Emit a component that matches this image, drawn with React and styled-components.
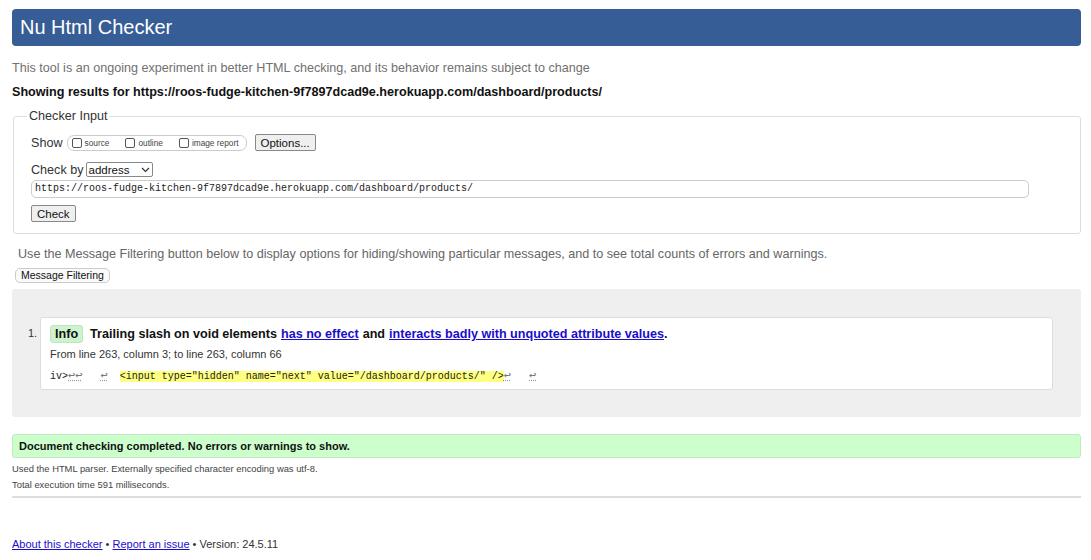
import React from "react";
import styled, { createGlobalStyle } from "styled-components";

const Global = createGlobalStyle`
  html, body { margin: 0; padding: 0; background: #fff; }
  body { font-family: "Liberation Sans", Arial, sans-serif; color: #222; }
`;

const Page = styled.div`
  padding: 9px 10px 0 12px;
  display: flex;
  flex-direction: column;
`;

const Header = styled.h1`
  margin: 0;
  height: 37px;
  background: #365d95;
  border-radius: 4px;
  color: #fff;
  font-weight: normal;
  font-size: 20px;
  line-height: 37px;
  padding-left: 8px;
`;

const Intro = styled.p`
  margin: 14px 0 0 0;
  font-size: 12.6px;
  color: #707070;
  line-height: 16px;
`;

const Results = styled.p`
  margin: 8px 0 0 0;
  font-size: 12.6px;
  font-weight: bold;
  color: #111;
  line-height: 16px;
`;

const Fieldset = styled.fieldset`
  margin: 9px 0 0 1px;
  border: 1px solid #ddd;
  border-radius: 3px;
  padding: 0 51px 11px 17px;
  display: flex;
  flex-direction: column;
`;

const Legend = styled.legend`
  font-size: 12.6px;
  color: #333;
  padding: 0 2px;
  margin-left: -4px;
`;

const Row = styled.div`
  display: flex;
  align-items: center;
  gap: ${(p) => p.$gap || 3}px;
  margin-top: ${(p) => p.$mt || 0}px;
  font-size: 12.6px;
  color: #333;
`;

const Group = styled.span`
  display: inline-flex;
  align-items: center;
  gap: 16px;
  border: 1px solid #ccc;
  border-radius: 7px;
  height: 14px;
  width: 170px;
  padding: 0 4px 0 4px;
  margin-left: 1px;
`;

const Check = styled.label`
  display: inline-flex;
  align-items: center;
  gap: 2px;
  font-size: 8.3px;
  color: #444;
`;

const Box = styled.span`
  width: 8px;
  height: 8px;
  border: 1px solid #555;
  border-radius: 2px;
  display: inline-block;
  margin-right: 1px;
`;

const Button = styled.button`
  font-family: "Liberation Sans", Arial, sans-serif;
  font-size: ${(p) => p.$fs || 12}px;
  color: #111;
  background: ${(p) => (p.$light ? "#fafafa" : "#efefef")};
  border: 1px solid ${(p) => (p.$light ? "#ccc" : "#888")};
  border-radius: ${(p) => (p.$light ? 5 : 2)}px;
  height: ${(p) => p.$h || 17}px;
  padding: 0 ${(p) => p.$px || 5}px;
  margin-left: ${(p) => p.$ml || 0}px;
  cursor: pointer;
`;

const Select = styled.span`
  display: inline-flex;
  align-items: center;
  justify-content: space-between;
  width: 61px;
  height: 13px;
  border: 1px solid #888;
  border-radius: 2px;
  padding: 0 2px;
  font-size: 11.5px;
  color: #111;
`;

const UrlInput = styled.div`
  margin-top: 3px;
  height: 16px;
  border: 1px solid #ccc;
  border-radius: 5px;
  font-family: "Liberation Mono", "Courier New", monospace;
  font-size: 10px;
  line-height: 16px;
  padding-left: 3px;
  color: #222;
`;

const Help = styled.p`
  margin: 12px 0 0 6px;
  font-size: 12.6px;
  color: #666;
  line-height: 16px;
`;

const FilterWrap = styled.div`
  margin: 3px 0 0 3px;
`;

const Panel = styled.div`
  margin-top: 6px;
  background: #efefef;
  border-radius: 3px;
  padding: 28px 28px 27px 16px;
`;

const List = styled.ol`
  margin: 0;
  padding: 0;
  list-style: none;
`;

const Item = styled.li`
  display: flex;
  align-items: flex-start;
  gap: 3px;
`;

const Num = styled.span`
  font-size: 11px;
  color: #333;
  width: 9px;
  padding-top: 10px;
`;

const Card = styled.div`
  flex: 1;
  background: #fff;
  border: 1px solid #ddd;
  border-radius: 3px;
  padding: 7px 9px 5px 9px;
`;

const Title = styled.p`
  margin: 0;
  font-size: 12.6px;
  font-weight: bold;
  color: #111;
  display: flex;
  align-items: center;
  line-height: 18px;
`;

const Badge = styled.span`
  background: #ccf3cc;
  border: 1px solid #bde6bd;
  border-radius: 3px;
  padding: 0 4px;
  margin-right: 7px;
  height: 16px;
  line-height: 16px;
`;

const Link = styled.a`
  color: #1a0dcc;
  text-decoration: underline;
  margin: 0 ${(p) => (p.$tight ? 0 : 4)}px 0 4px;
`;

const Loc = styled.p`
  margin: 4px 0 0 0;
  font-size: 11px;
  color: #333;
  line-height: 14px;
`;

const Code = styled.p`
  margin: 8px 0 0 0;
  font-family: "Liberation Mono", "Courier New", monospace;
  font-size: 10px;
  color: #222;
  line-height: 14px;
  white-space: pre;
`;

const Ret = styled.span`
  color: #777;
  font-size: 12px;
  text-decoration: underline dotted #999;
`;

const Mark = styled.mark`
  background: #ffff80;
  color: #222;
`;

const Success = styled.p`
  margin: 17px 0 0 0;
  background: #ccffcc;
  border: 1px solid #c2eac2;
  border-radius: 3px;
  height: 22px;
  line-height: 22px;
  padding-left: 6px;
  font-size: 11px;
  font-weight: bold;
  color: #111;
`;

const Small = styled.p`
  margin: ${(p) => p.$mt || 0}px 0 0 0;
  font-size: 9.4px;
  color: #444;
  line-height: 12px;
`;

const Rule = styled.hr`
  margin: 5px 0 0 0;
  border: 0;
  border-top: 2px solid #ddd;
`;

const Footer = styled.p`
  margin: 39px 0 0 0;
  font-size: 11px;
  color: #333;
  line-height: 14px;
`;

const FootLink = styled.a`
  color: #1a0dcc;
  text-decoration: underline;
`;

export default function App() {
  return (
    <>
      <Global />
      <Page>
        <Header>Nu Html Checker</Header>
        <Intro>This tool is an ongoing experiment in better HTML checking, and its behavior remains subject to change</Intro>
        <Results>Showing results for https://roos-fudge-kitchen-9f7897dcad9e.herokuapp.com/dashboard/products/</Results>
        <Fieldset>
          <Legend>Checker Input</Legend>
          <Row $gap={3} $mt={11}>
            Show
            <Group>
              <Check><Box />source</Check>
              <Check><Box />outline</Check>
              <Check><Box />image report</Check>
            </Group>
            <Button $h={17} $px={5} $ml={5} $fs={11.5}>Options...</Button>
          </Row>
          <Row $gap={2} $mt={11}>
            Check by
            <Select>
              address
              <svg width="9" height="6" viewBox="0 0 9 6">
                <path d="M1 1 L4.5 4.5 L8 1" stroke="#333" strokeWidth="1.2" fill="none" />
              </svg>
            </Select>
          </Row>
          <UrlInput>https://roos-fudge-kitchen-9f7897dcad9e.herokuapp.com/dashboard/products/</UrlInput>
          <Row $mt={7}>
            <Button $h={17} $px={5} $fs={11.5}>Check</Button>
          </Row>
        </Fieldset>
        <Help>Use the Message Filtering button below to display options for hiding/showing particular messages, and to see total counts of errors and warnings.</Help>
        <FilterWrap>
          <Button $light $h={15} $px={5} $fs={10.5}>Message Filtering</Button>
        </FilterWrap>
        <Panel>
          <List>
            <Item>
              <Num>1.</Num>
              <Card>
                <Title>
                  <Badge>Info</Badge>
                  Trailing slash on void elements
                  <Link href="#">has no effect</Link>
                  and
                  <Link href="#" $tight>interacts badly with unquoted attribute values</Link>.
                </Title>
                <Loc>From line 263, column 3; to line 263, column 66</Loc>
                <Code>iv&gt;<Ret>↩↩</Ret>   <Ret>↩</Ret>  <Mark>&lt;input type="hidden" name="next" value="/dashboard/products/" /&gt;</Mark><Ret>↩</Ret>   <Ret>↩</Ret></Code>
              </Card>
            </Item>
          </List>
        </Panel>
        <Success>Document checking completed. No errors or warnings to show.</Success>
        <Small $mt={5}>Used the HTML parser. Externally specified character encoding was utf-8.</Small>
        <Small $mt={4}>Total execution time 591 milliseconds.</Small>
        <Rule />
        <Footer>
          <FootLink href="#">About this checker</FootLink> • <FootLink href="#">Report an issue</FootLink> • Version: 24.5.11
        </Footer>
      </Page>
    </>
  );
}
